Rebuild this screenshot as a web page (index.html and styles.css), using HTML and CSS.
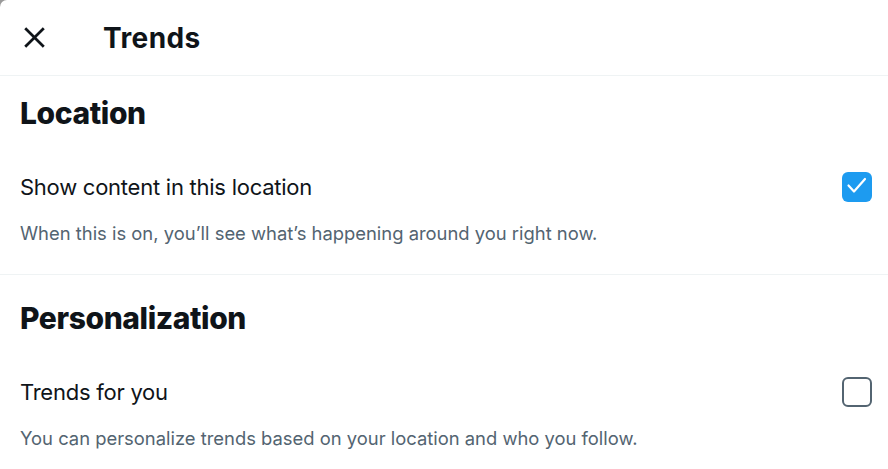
FILE: index.html
```html
<!DOCTYPE html>
<html lang="en">
<head>
<meta charset="utf-8">
<title>Trends</title>
<link rel="stylesheet" href="styles.css">
</head>
<body>
<div class="dialog">
  <header class="topbar">
    <button class="close" aria-label="Close">
      <svg viewBox="0 0 24 24" width="33" height="33"><path d="M10.59 12L4.54 5.96l1.42-1.42L12 10.59l6.04-6.05 1.42 1.42L13.41 12l6.05 6.04-1.42 1.42L12 13.41l-6.04 6.05-1.42-1.42L10.59 12z"/></svg>
    </button>
    <h1 class="title">Trends</h1>
  </header>
  <section class="section first">
    <h2 class="heading">Location</h2>
    <div class="row">
      <span class="label">Show content in this location</span>
      <span class="check on">
        <svg viewBox="0 0 30 30" width="30" height="30"><polyline points="6.5,13.5 12,19.5 23,7" fill="none" stroke="#fff" stroke-width="2.2" stroke-linecap="round" stroke-linejoin="round"/></svg>
      </span>
    </div>
    <p class="desc">When this is on, you’ll see what’s happening around you right now.</p>
  </section>
  <section class="section">
    <h2 class="heading">Personalization</h2>
    <div class="row">
      <span class="label">Trends for you</span>
      <span class="check off"></span>
    </div>
    <p class="desc">You can personalize trends based on your location and who you follow.</p>
  </section>
</div>
</body>
</html>
```
FILE: styles.css
```css
html { background: #9a9a9a; }
body { margin: 0; font-family: Inter, "Noto Sans", sans-serif; color: #0f1419; }
.dialog {
  background: #fff;
  min-height: 100vh;
  border-top-left-radius: 7px;
  overflow: hidden;
}
.topbar {
  height: 75px;
  display: flex;
  align-items: center;
  border-bottom: 1px solid #eff3f4;
  padding-left: 18px;
}
.close {
  border: 0; background: none; padding: 0;
  width: 33px; height: 33px;
  display: flex; align-items: center; justify-content: center;
  margin-right: 52px;
}
.close svg { fill: #0f1419; }
.title { margin: 0; font-size: 28px; line-height: 34px; font-weight: 700; letter-spacing: 0.4px; }
.section {
  padding: 25px 16px 29px 20px;
  border-bottom: 1px solid #eff3f4;
}
.section.first { padding-top: 19px; }
.section:last-child { border-bottom: 0; }
.heading {
  margin: 0;
  line-height: 36px;
  font-size: 30px;
  font-weight: 800;
  letter-spacing: -0.4px;
}
.row {
  margin-top: 42px;
  height: 28px;
  display: flex;
  align-items: center;
  justify-content: space-between;
}
.label { font-size: 22px; line-height: 28px; letter-spacing: -0.25px; }
.check {
  width: 30px; height: 30px; box-sizing: border-box;
  border-radius: 6px;
  display: block;
  flex: none;
}
.check.on { background: #1d9bf0; }
.check.on svg { display: block; }
.check.off { border: 2.5px solid #536471; }
.desc {
  margin: 20px 0 0;
  line-height: 24px;
  font-size: 18.4px;
  color: #536471;
}
```
